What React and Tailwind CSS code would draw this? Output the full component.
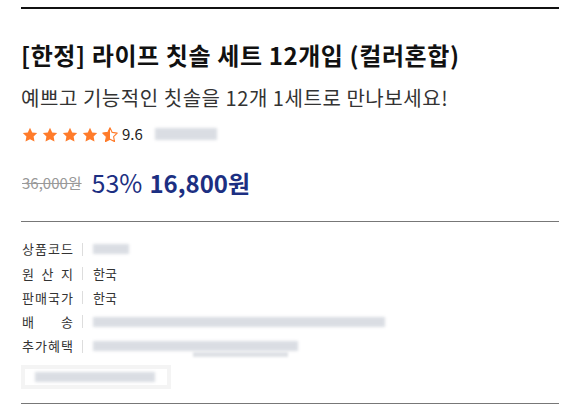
import React from 'react'

const FONT = { fontFamily: '"Noto Sans CJK KR", "Noto Sans", sans-serif' }
const STAR = 'M8 0.8l2.2 4.6 5 .7-3.6 3.5.9 5-4.5-2.4-4.5 2.4.9-5L0.8 6.1l5-.7z'

const Star = ({ half }) => (
    <svg width="16" height="15" viewBox="0 0 16 15">
        {half ? (
            <>
                <defs>
                    <clipPath id="halfclip"><rect x="0" y="0" width="8" height="15" /></clipPath>
                </defs>
                <path d={STAR} fill="none" stroke="#ff7b2a" strokeWidth="1.1" strokeLinejoin="round" />
                <path d={STAR} fill="#ff7b2a" clipPath="url(#halfclip)" />
            </>
        ) : (
            <path d={STAR} fill="#ff7b2a" />
        )}
    </svg>
)

// pixelated / blurred placeholders from the screenshot
const Blur = ({ w, className = '' }) => (
    <div className={`h-[10px] bg-gray-300/80 blur-[1.5px] ${className}`} style={{ width: w }} />
)

const rows = [
    { label: ['상', '품', '코', '드'], blur: 36 },
    { label: ['원', '산', '지'], value: '한국' },
    { label: ['판', '매', '국', '가'], value: '한국' },
    { label: ['배', '송'], blur: 292 },
    { label: ['추', '가', '혜', '택'], blur: 205, extra: true },
]

export default function App() {
    return (
        <div className="w-[584px] h-[415px] bg-white pl-[21px] pt-[7px] overflow-hidden" style={FONT}>
            <div className="w-[538px]">
                <div className="h-[2px] bg-[#111]" />

                <h1 className="mt-[30px] h-[32px] leading-[32px] text-[24px] font-bold text-[#111] tracking-[0.6px]">
                    [한정] 라이프 칫솔 세트 12개입 (컬러혼합)
                </h1>
                <p className="mt-[13px] h-[28px] leading-[28px] text-[20px] text-[#333] tracking-[0.55px]">
                    예쁘고 기능적인 칫솔을 12개 1세트로 만나보세요!
                </p>

                <div className="mt-[12px] h-[20px] flex items-center">
                    <div className="flex items-center gap-[4px] pl-[1px]">
                        <Star /><Star /><Star /><Star /><Star half />
                    </div>
                    <span className="ml-[4px] text-[15px] text-[#222]">9.6</span>
                    <Blur w={62} className="ml-[12px] h-[12px] bg-gray-200" />
                </div>

                <div className="mt-[23px] h-[32px] flex items-center">
                    <span className="text-[15px] text-[#999] line-through decoration-[#999] pl-[1px]">36,000원</span>
                    <span className="ml-[10px] text-[25px] text-[#1c2f82]">53%</span>
                    <span className="ml-[7px] text-[24px] font-bold text-[#1c2f82]">16,800원</span>
                </div>

                <div className="mt-[22px] h-px bg-[#777]" />

                <div className="mt-[15px] flex flex-col">
                    {rows.map((r, i) => (
                        <div key={i} className="h-[24.25px] flex items-center text-[13px] text-[#333]">
                            <span className="w-[51px] ml-[1px] flex justify-between">
                                {r.label.map((c, j) => <span key={j}>{c}</span>)}
                            </span>
                            <span className="w-px h-[13px] bg-[#ddd] ml-[9px]" />
                            <div className="ml-[10px] relative">
                                {r.value ? (
                                    <span>{r.value}</span>
                                ) : (
                                    <Blur w={r.blur} />
                                )}
                                {r.extra && (
                                    <div className="absolute left-[100px] top-[11px] w-[95px] h-[5px] bg-gray-300/70 blur-[1px]" />
                                )}
                            </div>
                        </div>
                    ))}
                </div>

                <div className="mt-[7px] w-[150px] h-[24px] bg-[#f4f4f4] p-[4px]">
                    <div className="w-full h-full bg-white flex items-center px-[10px]">
                        <Blur w={120} className="h-[8px] bg-gray-300/80" />
                    </div>
                </div>

                <div className="mt-[14px] h-px bg-[#777]" />
            </div>
        </div>
    )
}
